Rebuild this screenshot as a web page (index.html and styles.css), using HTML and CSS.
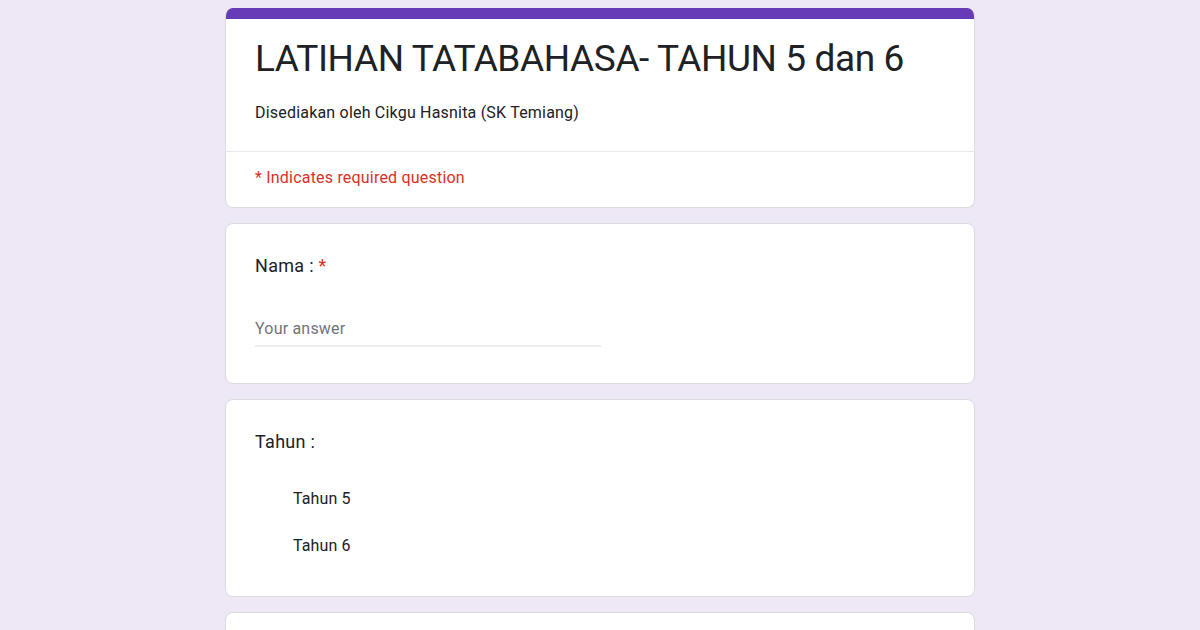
FILE: index.html
```html
<!DOCTYPE html>
<html>
<head>
<meta charset="utf-8">
<link rel="stylesheet" href="styles.css">
</head>
<body>
<div class="form">
  <div class="card header-card">
    <div class="accent"></div>
    <div class="header-main">
      <h1 class="title">LATIHAN TATABAHASA- TAHUN 5 dan 6</h1>
      <div class="desc">Disediakan oleh Cikgu Hasnita (SK Temiang)</div>
    </div>
    <div class="required-note">* Indicates required question</div>
  </div>
  <div class="card question">
    <div class="q-title">Nama : <span class="star">*</span></div>
    <div class="answer">
      <div class="answer-text">Your answer</div>
    </div>
  </div>
  <div class="card question q-tahun">
    <div class="q-title">Tahun :</div>
    <div class="options">
      <div class="option">Tahun 5</div>
      <div class="option">Tahun 6</div>
    </div>
  </div>
  <div class="card question q-next"></div>
</div>
</body>
</html>
```

FILE: styles.css
```css
html, body {
  margin: 0;
  padding: 0;
  background: #ede7f6;
  font-family: Roboto, "Liberation Sans", sans-serif;
  color: #202124;
  overflow: hidden;
  height: 630px;
}
.form {
  width: 750px;
  margin: 0 auto;
  padding-top: 8px;
  display: flex;
  flex-direction: column;
  gap: 15px;
}
.card {
  background: #fff;
  border: 1px solid #dadce0;
  border-radius: 8px;
  box-sizing: border-box;
}
.header-card {
  overflow: hidden;
  border-top: none;
  height: 200px;
}
.accent {
  height: 11px;
  background: #673ab7;
}
.header-main {
  padding: 16px 28px 0 29px;
  height: 133px;
  box-sizing: border-box;
  border-bottom: 1px solid #e8eaed;
}
.title {
  margin: 0;
  font-weight: 400;
  font-size: 37px;
  line-height: 48px;
  letter-spacing: -0.4px;
}
.desc {
  margin-top: 20px;
  font-size: 16px;
  line-height: 20px;
  letter-spacing: 0.2px;
}
.required-note {
  color: #d93025;
  font-size: 16px;
  line-height: 20px;
  padding: 16px 29px 0;
  letter-spacing: 0.2px;
}
.question {
  padding: 30px 28px 0 29px;
}
.q-title {
  font-size: 18px;
  line-height: 24px;
  letter-spacing: 0.3px;
}
.star {
  color: #d93025;
}
.question:nth-child(2) {
  height: 161px;
}
.answer {
  margin-top: 41px;
  width: 346px;
  border-bottom: 2px solid #eeeeee;
  padding-bottom: 6px;
}
.answer-text {
  color: #70757a;
  font-size: 16px;
  line-height: 20px;
  letter-spacing: 0.2px;
}
.q-tahun {
  height: 198px;
}
.options {
  margin-top: 35px;
  padding-left: 38px;
  display: flex;
  flex-direction: column;
  gap: 27px;
}
.option {
  font-size: 16px;
  line-height: 20px;
  letter-spacing: 0.1px;
}
.q-next {
  height: 60px;
}
```
